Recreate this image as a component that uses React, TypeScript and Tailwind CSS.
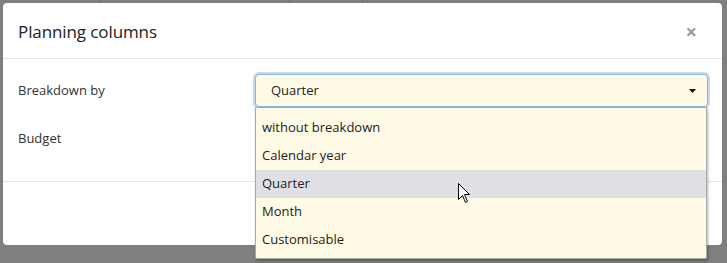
import React from "react";

const font = { fontFamily: '"Open Sans", "Noto Sans", Arial, sans-serif' };

export default function App() {
  const items = ["without breakdown", "Calendar year", "Quarter", "Month", "Customisable"];
  return (
    <div className="relative w-[727px] h-[263px] overflow-hidden bg-[#7f7f7f]" style={font}>
      <div className="absolute left-[99px] top-0 w-px h-[3px] bg-[#6e6e6e]" />
      <div className="absolute left-[289px] top-0 w-px h-[3px] bg-[#6e6e6e]" />
      <div className="absolute left-[362px] top-0 w-px h-[3px] bg-[#6e6e6e]" />
      <div className="ml-[3px] mt-[3px] w-[719px] h-[242px] bg-white rounded-[4px] flex flex-col">
        <div className="h-[56px] shrink-0 flex items-center justify-between pl-[15px] pr-[25px] border-b border-[#e5e5e5]">
          <span className="text-[17px] text-[#222] pt-[3px] tracking-[-0.1px]">Planning columns</span>
          <span className="text-[#999] text-[20px] font-bold leading-none pt-[2px]">×</span>
        </div>
        <div className="h-[123px] shrink-0 pl-[15px] pr-[14px] pt-[15px] border-b border-[#e5e5e5] flex flex-col gap-[15px]">
          <div className="grid grid-cols-[237px_1fr] items-center">
            <span className="text-[13px] text-[#333]">Breakdown by</span>
            <div className="relative">
              <div className="h-[33px] rounded-[4px] border border-[#8fb3df] bg-[#fffae5] shadow-[0_0_0_2px_#c4d9f2] flex items-center justify-between pl-[15px] pr-[11px]">
                <span className="text-[13px] text-[#222] pt-[1px]">Quarter</span>
                <svg width="7" height="4" viewBox="0 0 7 4"><path d="M0 0h7L3.5 4z" fill="#111" /></svg>
              </div>
              <div className="absolute left-0 right-[1px] top-[33px] z-10 bg-[#fffae5] border border-[#a9a9a9] rounded-b-[2px] shadow-[1px_2px_3px_rgba(0,0,0,0.3)] pt-[6px] pb-[4px]">
                {items.map((it) => (
                  <div
                    key={it}
                    className={
                      "h-[28px] flex items-center pl-[6px] text-[13px] text-[#222] " +
                      (it === "Quarter" ? "bg-[#e0dfe5]" : "")
                    }
                  >
                    {it}
                  </div>
                ))}
              </div>
            </div>
          </div>
          <div className="grid grid-cols-[237px_1fr] items-center h-[33px]">
            <span className="text-[13px] text-[#333]">Budget</span>
            <div />
          </div>
        </div>
        <div className="flex-1" />
      </div>
      <svg className="absolute left-[458px] top-[183px] z-20" width="13" height="21" viewBox="0 0 13 21">
        <path d="M0.5 0.5 L0.5 16.5 L4.5 12.5 L7.5 19.5 L9.5 18.5 L6.5 11.5 L11.5 11.5 Z" fill="#fff" stroke="#000" strokeWidth="1" strokeLinejoin="miter" />
      </svg>
    </div>
  );
}
